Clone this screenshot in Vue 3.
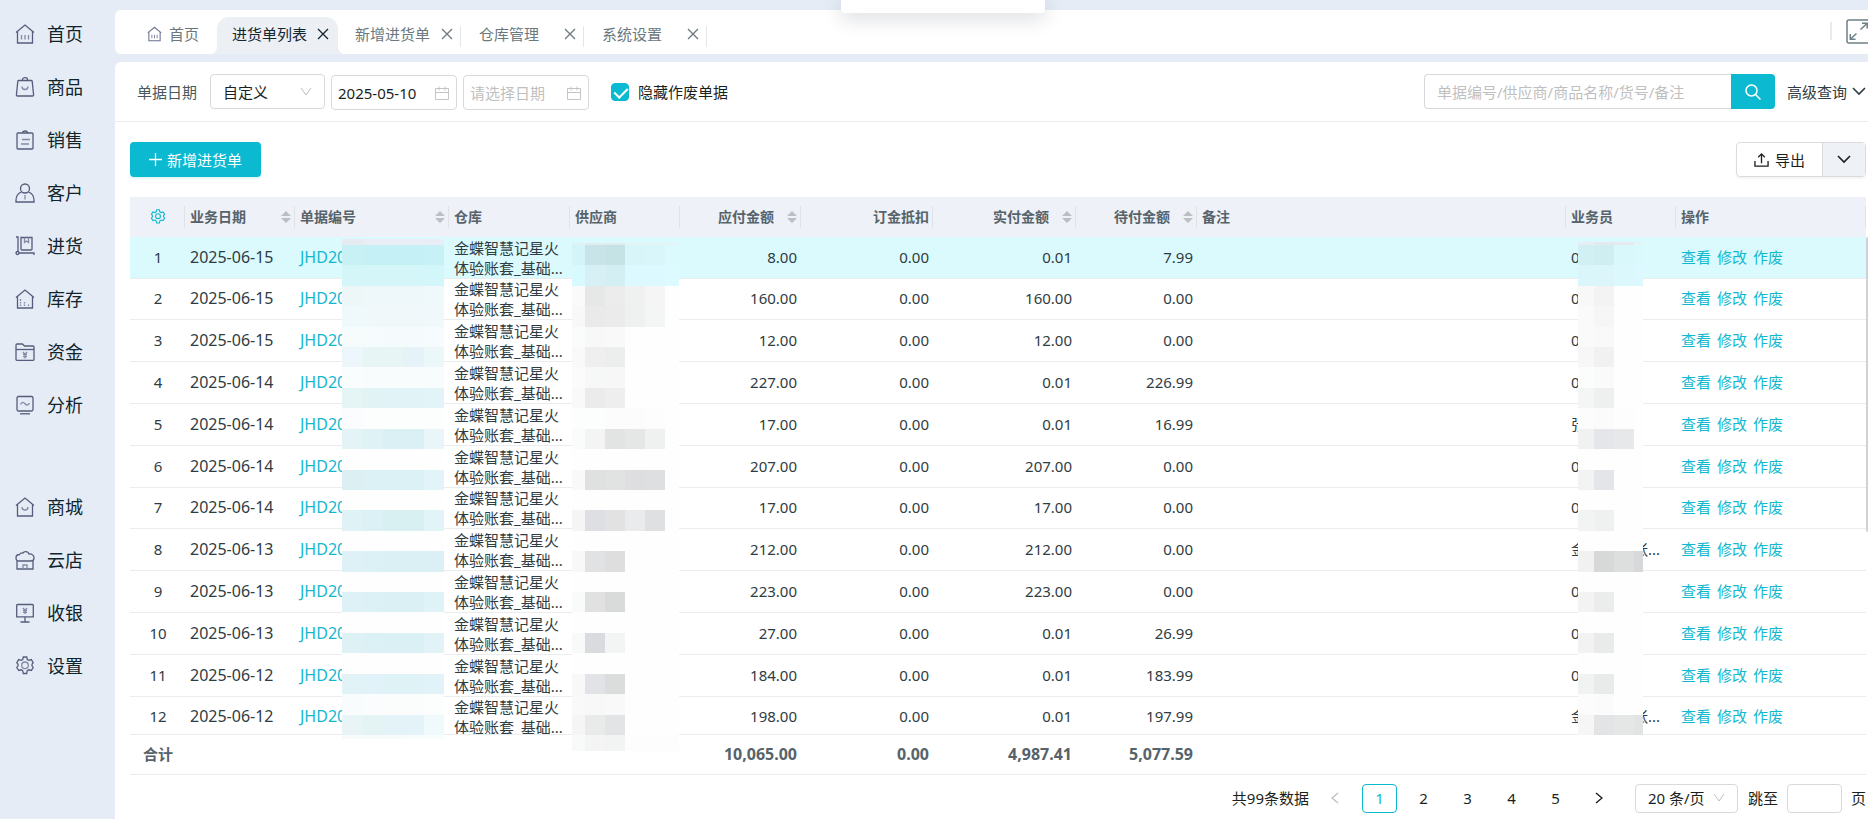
<script setup>
import { ref } from 'vue'

const mainNav = [
  { label: '首页', icon: 'home' },
  { label: '商品', icon: 'bag' },
  { label: '销售', icon: 'clipboard' },
  { label: '客户', icon: 'user' },
  { label: '进货', icon: 'cart' },
  { label: '库存', icon: 'stock' },
  { label: '资金', icon: 'folder' },
  { label: '分析', icon: 'chart' },
]
const moreNav = [
  { label: '商城', icon: 'mall' },
  { label: '云店', icon: 'cloud' },
  { label: '收银', icon: 'cashier' },
  { label: '设置', icon: 'gear' },
]

const gear =
  'M8.3 1h3.4l.6 2.5 1.5.9 2.5-.8 1.9 3-1.2 1.6v1.6l1.2 1.7-1.9 3-2.5-.7-1.5.9-.6 2.8H8.3l-.6-2.8-1.5-.9-2.5.7-1.900-3 1.200-1.700V8.200L1.800 6.600l1.900-3 2.500.8 1.500-.9z'

// Outer strokes are drawn dark, inner details in a lighter tone.
const icons = {
  home: { outer: ['M1 8.500 10 1l9 7.500', 'M2.500 7.500V19h15V7.500'], inner: ['M6.500 11v4.500M10 11v4.500M13.500 11v4.500'] },
  bag: { outer: ['M3.800 3.500h12.400a1 1 0 0 1 1 .9L18.600 18a1 1 0 0 1-1 1H2.400a1 1 0 0 1-1-1L2.800 4.400a1 1 0 0 1 1-.9z', 'M7.500 3.500v-1a2.500 1.800 0 0 1 5 0v1'], inner: ['M7 9.500a3 3 0 0 0 6 0'] },
  clipboard: { outer: ['M3 3h14a1 1 0 0 1 1 1v14a1 1 0 0 1-1 1H3a1 1 0 0 1-1-1V4a1 1 0 0 1 1-1z', 'M7.500 3a2.500 2 0 0 1 5 0'], inner: ['M7 9.500h8M6 14h8'] },
  user: { outer: ['M10 1a4.500 4.500 0 1 1 0 9 4.500 4.500 0 0 1 0-9z', 'M6.500 9C3.500 10 1 13 1 17.500V19h18v-1.500C19 13 16.500 10 13.500 9'], inner: ['M10 12v4.500M9.400 14.500h1.200'] },
  cart: { outer: ['M1 1h2v15', 'M6 1.500h11v11.500a1 1 0 0 1-1 1H7a1 1 0 0 1-1-1z', 'M2.500 15.500a1.500 1.500 0 1 1 0 3 1.500 1.500 0 0 1 0-3z', 'M4 17h15v2'], inner: ['M9.500 1.500v5l2-1.500 2 1.500v-5'] },
  stock: { outer: ['M1 8.500 10 1l9 7.500', 'M2.500 7.500V19h15V7.500'], inner: ['M5.500 10v2M5.500 13v1.500M5.500 15.500v1.500M9.500 13v1.500M9.500 15.500v1.500M13.500 15.500v1.500'] },
  folder: { outer: ['M1 17.500V3a1 1 0 0 1 1-1h5.500l2 2H18a1 1 0 0 1 1 1v12.500a.8.8 0 0 1-.8.8H1.800a.8.8 0 0 1-.8-.8z', 'M1 7.500h18'], inner: ['M8 10l2 2.500L12 10M10 12.500V16.500M8 12.700h4M8 14.600h4'] },
  chart: { outer: ['M3.500 1.500h13a1.500 1.500 0 0 1 1.500 1.500v11.500a1.500 1.500 0 0 1-1.500 1.500h-13A1.500 1.500 0 0 1 2 14.500V3a1.500 1.500 0 0 1 1.500-1.500z', 'M5 18.800h10'], inner: ['M5.500 9.500c1.500-3 3-2.500 4.500-.8s3 2 4.500-.5'] },
  mall: { outer: ['M1 8.500 10 1l9 7.500', 'M2.500 7.500V19h15V7.500'], inner: ['M7 10a3 3 0 0 0 6 0'] },
  cloud: { outer: ['M4 11C1.800 11 1 9.500 1 8c0-2 1.500-3.500 3.500-3.500C5.500 2.500 7.500 3 8 3c1-2 5-2 6 1 3-.5 5 1.500 5 4 0 2-1 3-3 3z', 'M2 11v8h16v-8'], inner: ['M8 19v-4h4v4'] },
  cashier: { outer: ['M2.500 1.500h15a.8.8 0 0 1 .8.8v11.500h-16.600V2.300a.8.8 0 0 1 .8-.8z', 'M10 14v5M5.500 19h9'], inner: ['M8 5l2 2.500L12 5M10 7.500V11M8 7.600h4M8 9.400h4'] },
  gear: { outer: [gear], inner: ['M10 6a3.300 3.300 0 1 1 0 6.600A3.300 3.300 0 0 1 10 6z'] },
}

const tabs = [
  { label: '进货单列表', kind: 'active' },
  { label: '新增进货单', kind: 'plain' },
  { label: '仓库管理', kind: 'wide' },
  { label: '系统设置', kind: 'wide' },
]

const hideVoid = ref(true)
const columns = [
  { key: 'date', label: '业务日期', sort: true },
  { key: 'no', label: '单据编号', sort: true },
  { key: 'store', label: '仓库' },
  { key: 'vendor', label: '供应商' },
  { key: 'due', label: '应付金额', sort: true, num: true },
  { key: 'deposit', label: '订金抵扣', num: true },
  { key: 'paid', label: '实付金额', sort: true, num: true },
  { key: 'rest', label: '待付金额', sort: true, num: true },
  { key: 'memo', label: '备注' },
  { key: 'staff', label: '业务员' },
  { key: 'ops', label: '操作' },
]

const rows = [
  ['2025-06-15', '8.00', '0.01', '7.99', '0'],
  ['2025-06-15', '160.00', '160.00', '0.00', '0'],
  ['2025-06-15', '12.00', '12.00', '0.00', '0'],
  ['2025-06-14', '227.00', '0.01', '226.99', '0'],
  ['2025-06-14', '17.00', '0.01', '16.99', '张'],
  ['2025-06-14', '207.00', '207.00', '0.00', '0'],
  ['2025-06-14', '17.00', '17.00', '0.00', '0'],
  ['2025-06-13', '212.00', '212.00', '0.00', '金', '张...'],
  ['2025-06-13', '223.00', '223.00', '0.00', '0'],
  ['2025-06-13', '27.00', '0.01', '26.99', '0'],
  ['2025-06-12', '184.00', '0.01', '183.99', '0'],
  ['2025-06-12', '198.00', '0.01', '197.99', '金', '张...'],
]

// Masks over private values: one line per band, one colour per column.
function mask(cols, blank, lines) {
  return lines.flatMap((line) => {
    const list = line ? line.split(' ') : []
    return Array.from({ length: cols }, (_, i) => '#' + (list[i] || blank))
  })
}
const docMask = mask(5, 'fefefe', [
  'e4ebf1 e9edf5 e9edf5 e9edf5 e9edf5',
  'c8f1f6 c4f0f6 c4f0f6 c4f0f6 c7f1f7',
  'd5f6f9 d5f6f9 d5f6f9 d5f6f9 d3f6fa',
  'edf7f8 eef7f9 eef7f9 eef7f9 eff8fa',
  'eff8fa f0f8fa f0f8fa f0f8fa f0f8fb',
  'f6fbfc f6fbfd f5fafd f5fafd f7fbfd',
  'edf6fa e7f5f5 e7f5f5 e5f3f8 ecf7fa',
  'fafdfd f9fcfc f9fcfc f9fcfc f9fcfc',
  'e5f4f5 e2f3f6 e2f3f8 e2f3f8 e3f4f9',
  'fbfcfd fcfdfd fcfdfd fcfdfd fcfdfd',
  'e4f4f6 dff2f6 dbf0f4 dbf0f4 e9f5f9',
  '', 'dcf0f3 dbf1f5 dbf1f6 dbf1f6 e3f4f8',
  '', 'dff2f6 dcf1f5 d9f0f3 d9f0f3 e3f4f8',
  '', 'def1f6 dcf1f5 dbf0f4 dbf0f4 dbf0f4',
  '', 'def1f6 dcf1f5 dbf0f4 dbf0f4 dff2f6',
  '', 'def2f6 dcf1f5 dbf0f4 dbf0f4 e2f3f7',
  '', 'e2f3f7 e1f3f8 dff2f6 dff2f6 e1f3f8',
  'f9fcfc fbfcfd fbfdfd fbfdfd fcfdfd',
  'e8f4f6 e4f4f4 e3f3f8 e3f3f8 f0f9fb',
  'f6fafa f6fafa f6fbfb f8fcfc fafdfd',
])
const vendorMask = mask(6, 'fefefe', [
  'dff1f5 dfedf1 dfedf1 e3f3f6 e3f3f6 e3f3f6',
  'd3f4f8 c8e4e8 c5e2e5 d8f6fa d9f7fb dafafe',
  'd8f9fd d6f0f5 d4eff4 dbf9fe dbf9fe dcfaff',
  'fafafa e6e7e7 ececec eff0f0 f4f5f4',
  'f8f8f8 ebeaea ebebeb eff0f0 f4f5f5',
  'fafbfb f7f8f7 f8f9f8',
  'f8f9f8 eeefee eceeed',
  'fafbfa f6f7f7 f7f7f7',
  'f8f9f8 ecebec eeeeee',
  'fcfdfd fcfdfd fcfcfc fcfcfc fdfdfd',
  'fafbfb f4f4f4 e2e4e3 e5e6e6 eff1f0',
  '', 'f9f9f9 dfe1e0 e1e2e2 dedee0 dedfe1',
  '', 'f5f5f5 dedfe2 e1e2e1 eaebec dfe0e2',
  '', 'f8f8f8 e1e2e4 dddedd',
  '', 'f9fafa e0e1e0 d9dada',
  '', 'f8f9f9 d9dbde f3f4f4',
  '', 'f8f8f8 e2e3e6 dbdddc',
  'f9f9f9 f8f8f8 f9f9f9',
  'f5f5f5 e9ebea e3e4e6',
  'f8f9f9 f4f4f4 f2f4f3 fdfdfd fdfdfd fdfdfd',
])
const staffMask = mask(4, 'fefefe', [
  'e6eef3 e4e9ee e6e9ef e3f4f7',
  'd0f0f4 cfeef2 d9f8fc d9f9fd',
  'daf6fb dbf5fa dbf8fd dbf9fe',
  'f8f8f8 f3f3f3', 'f9faf9 f5f6f5', 'fafafa f9f9f9', 'f7f7f7 f1f1f1',
  'fbfcfc fafafa', 'f4f5f5 eef0ef', 'fcfcfc fbfbfb fdfdfd', 'f0f2f1 e5e6e9 e7e8ea',
  '', 'f2f3f3 e4e5e8', '', 'f2f3f3 eff1f0', '', 'f1f1f1 d7d9d9 dddfde d7d8da',
  '', 'f2f3f2 ebeded', '', 'f1f2f1 e9ebea', '', 'f1f3f2 e9ebea',
  'fcfcfc fbfbfb', 'f6f6f6 e2e4e6 e5e7e7 e2e4e4',
])

const current = ref(1)
</script>

<template>
  <div class="shell">
    <aside class="sidebar">
      <nav v-for="(group, g) in [mainNav, moreNav]" :key="g" class="nav-group">
        <a v-for="item in group" :key="item.label" href="#" class="nav-item">
          <svg class="nav-icon" viewBox="0 0 20 20">
            <path v-for="d in icons[item.icon].outer" :key="d" :d="d" />
            <path v-for="d in icons[item.icon].inner" :key="d" :d="d" class="soft" />
          </svg>
          <span>{{ item.label }}</span>
        </a>
      </nav>
    </aside>

    <div class="main">
      <header class="tabs">
        <a href="#" class="tab home-tab">
          <svg class="home-icon" viewBox="0 0 20 20">
            <path v-for="d in icons.home.outer" :key="d" :d="d" />
            <path v-for="d in icons.home.inner" :key="d" :d="d" class="soft" />
          </svg>
          首页
        </a>
        <div v-for="tab in tabs" :key="tab.label" class="tab" :class="tab.kind">
          <a href="#">{{ tab.label }}</a>
          <button class="close" :aria-label="'关闭' + tab.label">
            <svg viewBox="0 0 12 12"><path d="M1 1l10 10M11 1 1 11" /></svg>
          </button>
        </div>
        <div class="tabs-end">
          <i class="bar"></i>
          <button class="full" aria-label="全屏">
            <svg viewBox="0 0 26 25">
              <rect x="1" y="1" width="24" height="23" rx="2" />
              <path d="M14.500 10.500 21 4.500M16 4.300h5.200v5.200M10.500 14.500 4.500 20M4.300 15v5.200h5.200" />
            </svg>
          </button>
        </div>
      </header>

      <section class="panel">
        <div class="filters">
          <label class="lbl" for="range">单据日期</label>
          <div class="select-box range">
            <select id="range"><option>自定义</option></select>
            <svg class="caret" viewBox="0 0 12 10"><path d="M1 1l5 7 5-7" /></svg>
          </div>
          <div v-for="(v, i) in ['2025-05-10', '']" :key="i" class="date-box">
            <input type="text" :value="v" placeholder="请选择日期" :aria-label="i ? '结束日期' : '开始日期'" />
            <svg viewBox="0 0 14 14"><path d="M.5 2.500h13v11H.5zM.5 6.500h13M4 .5v4M10 .5v4" /></svg>
          </div>
          <label class="check">
            <input v-model="hideVoid" type="checkbox" />
            <span>隐藏作废单据</span>
          </label>
          <form class="search" @submit.prevent>
            <input type="text" placeholder="单据编号/供应商/商品名称/货号/备注" aria-label="搜索" />
            <button aria-label="查询">
              <svg viewBox="0 0 16 16"><circle cx="6.500" cy="6.500" r="5.500" /><path d="M10.500 10.500 15.500 15.500" /></svg>
            </button>
          </form>
          <button class="advanced">
            高级查询
            <svg viewBox="0 0 14 9"><path d="M1 1l6 6 6-6" /></svg>
          </button>
        </div>

        <div class="actions">
          <button class="primary">
            <svg viewBox="0 0 13 13"><path d="M6.500 0v13M0 6.500h13" /></svg>
            新增进货单
          </button>
          <div class="export">
            <button class="export-main">
              <svg viewBox="0 0 16 16"><path d="M1 9v5.500h14V9M8 11.500V1.500M4.500 5 8 1.500 11.500 5" /></svg>
              导出
            </button>
            <button class="export-more" aria-label="更多导出">
              <svg viewBox="0 0 14 9"><path d="M1 1l6 6 6-6" /></svg>
            </button>
          </div>
        </div>

        <div class="grid">
          <div class="scroller">
            <table>
              <colgroup>
                <col class="c-idx" />
                <col v-for="c in columns" :key="c.key" :class="'c-' + c.key" />
              </colgroup>
              <thead>
                <tr>
                  <th class="idx">
                    <svg class="gear" viewBox="0 0 20 20"><path :d="gear" /><circle cx="10" cy="9" r="3" /></svg>
                  </th>
                  <th v-for="c in columns" :key="c.key" :class="{ num: c.num }">
                    <div class="th-in">
                      <span>{{ c.label }}</span>
                      <svg v-if="c.sort" class="sort" viewBox="0 0 10 12"><path d="M0 5l5-5 5 5zM0 7h10l-5 5z" /></svg>
                    </div>
                  </th>
                </tr>
              </thead>
              <tbody>
                <tr v-for="(r, i) in rows" :key="i" :class="{ on: i === 0 }">
                  <td class="idx">{{ i + 1 }}</td>
                  <td class="big">{{ r[0] }}</td>
                  <td class="big"><a href="#">JHD20</a></td>
                  <td class="store">金蝶智慧记星火<br />体验账套_基础...</td>
                  <td></td>
                  <td class="num">{{ r[1] }}</td>
                  <td class="num">0.00</td>
                  <td class="num">{{ r[2] }}</td>
                  <td class="num">{{ r[3] }}</td>
                  <td></td>
                  <td class="staff">{{ r[4] }}<span v-if="r[5]">{{ r[5] }}</span></td>
                  <td>
                    <div class="ops"><a href="#">查看</a><a href="#">修改</a><a href="#">作废</a></div>
                  </td>
                </tr>
              </tbody>
              <tfoot>
                <tr>
                  <td colspan="5" class="sum">合计</td>
                  <td class="num big">10,065.00</td>
                  <td class="num big">0.00</td>
                  <td class="num big">4,987.41</td>
                  <td class="num big">5,077.59</td>
                  <td colspan="3"></td>
                </tr>
              </tfoot>
            </table>
          </div>
          <div class="mask doc"><i v-for="(c, i) in docMask" :key="i" :style="{ background: c }"></i></div>
          <div class="mask vendor"><i v-for="(c, i) in vendorMask" :key="i" :style="{ background: c }"></i></div>
          <div class="mask person"><i v-for="(c, i) in staffMask" :key="i" :style="{ background: c }"></i></div>
          <div class="thumb"></div>
        </div>

        <footer class="pager">
          <span class="total">共99条数据</span>
          <button class="arrow dim" aria-label="上一页"><svg viewBox="0 0 8 12"><path d="M7 1 1 6l6 5" /></svg></button>
          <button v-for="n in 5" :key="n" class="page" :class="{ now: n === current }" @click="current = n">{{ n }}</button>
          <button class="arrow" aria-label="下一页"><svg viewBox="0 0 8 12"><path d="M1 1l6 5-6 5" /></svg></button>
          <div class="select-box size">
            <select aria-label="每页条数"><option>20 条/页</option></select>
            <svg class="caret" viewBox="0 0 12 10"><path d="M1 1l5 7 5-7" /></svg>
          </div>
          <label class="jump">跳至<input type="text" />页</label>
        </footer>
      </section>
    </div>

    <div class="popup"></div>
  </div>
</template>

<style>
body {
  margin: 0;
  overflow: hidden;
}
</style>

<style scoped>
.shell {
  display: flex;
  position: relative;
  height: 100vh;
  overflow: hidden;
  background: #e5ecf5;
  font: 15px/20px 'Noto Sans', 'Noto Sans CJK SC', sans-serif;
  color: #2f3c42;
}
.shell * {
  box-sizing: border-box;
}
a {
  color: inherit;
  text-decoration: none;
}
button,
input,
select {
  font: inherit;
  color: inherit;
  margin: 0;
  padding: 0;
  border: 0;
  background: none;
  outline: 0;
}
svg {
  fill: none;
  stroke: currentColor;
  flex: none;
}

.sidebar {
  flex: none;
  width: 115px;
  padding-top: 7px;
}
.nav-group + .nav-group {
  margin-top: 49px;
}
.nav-item {
  display: flex;
  align-items: center;
  gap: 12px;
  height: 53px;
  padding-left: 15px;
  font-size: 18px;
  color: #10242c;
}
.nav-icon {
  width: 20px;
  height: 20px;
  color: #565c7c;
  stroke-width: 1.3;
}
.soft {
  stroke: #8489a6;
}

.main {
  flex: 1;
  min-width: 0;
  display: flex;
  flex-direction: column;
  gap: 8px;
  padding-top: 10px;
}
.tabs {
  flex: none;
  display: flex;
  align-items: flex-end;
  height: 44px;
  background: #fff;
  border-radius: 6px 0 0 6px;
  color: #6b787d;
}
.tab {
  display: flex;
  align-items: center;
  height: 37px;
  padding-bottom: 4px;
  position: relative;
}
.home-tab {
  width: 102px;
  padding-left: 32px;
  gap: 7px;
}
.home-icon {
  width: 15px;
  height: 16px;
  color: #6a7090;
  stroke-width: 1.4;
}
.close {
  display: flex;
}
.close svg {
  width: 12px;
  height: 12px;
  stroke-width: 1.3;
}
.active {
  width: 121px;
  padding-left: 15px;
  gap: 10px;
  background: #eceff4;
  border-radius: 12px 12px 0 0;
  color: #14262e;
}
.active::before,
.active::after {
  content: '';
  position: absolute;
  bottom: 0;
  width: 6px;
  height: 8px;
}
.active::before {
  left: -6px;
  background: radial-gradient(ellipse 6px 8px at 0 0, #fff 98%, #eceff4);
}
.active::after {
  right: -6px;
  background: radial-gradient(ellipse 6px 8px at 100% 0, #fff 98%, #eceff4);
}
.plain {
  width: 123px;
  padding-left: 17px;
  gap: 11px;
}
.wide {
  width: 123px;
  padding: 0 8px 4px 18px;
  justify-content: space-between;
}
.plain::after,
.wide::after {
  content: '';
  position: absolute;
  right: 0;
  bottom: 7px;
  width: 1px;
  height: 21px;
  background: #e4e7ea;
}
.tabs-end {
  display: flex;
  align-items: center;
  gap: 14px;
  height: 44px;
  margin-left: auto;
  margin-right: -4px;
  padding-bottom: 2px;
}
.bar {
  width: 2px;
  height: 18px;
  background: #e8eaec;
}
.full {
  display: flex;
  color: #6f8086;
}
.full svg {
  width: 26px;
  height: 25px;
  stroke-width: 1.5;
}

.panel {
  flex: 1;
  min-height: 0;
  display: flex;
  flex-direction: column;
  background: #fff;
  border-radius: 6px 0 0 0;
}
.filters {
  flex: none;
  display: flex;
  align-items: center;
  height: 60px;
  padding-left: 22px;
  border-bottom: 1px solid #e9ebec;
}
.lbl {
  color: #4a575c;
}
.select-box {
  position: relative;
  border: 1px solid #d9d9d9;
  border-radius: 4px;
  color: #1b1f22;
}
.select-box select {
  appearance: none;
  width: 100%;
  height: 100%;
  padding-left: 12px;
}
.caret {
  position: absolute;
  right: 12px;
  top: 50%;
  width: 12px;
  height: 10px;
  margin-top: -5px;
  color: #bfbfbf;
  pointer-events: none;
}
.range {
  width: 115px;
  height: 35px;
  margin-left: 13px;
}
.date-box {
  display: flex;
  align-items: center;
  width: 126px;
  height: 35px;
  margin: 2px 0 0 6px;
  padding: 0 7px 0 6px;
  border: 1px solid #d9d9d9;
  border-radius: 4px;
  color: #1b1f22;
}
.date-box input {
  flex: 1;
  min-width: 0;
}
.date-box svg {
  width: 14px;
  height: 14px;
  color: #c4c4c4;
}
input::placeholder {
  color: #bfbfbf;
  opacity: 1;
}
.check {
  display: flex;
  align-items: center;
  gap: 9px;
  margin-left: 22px;
  color: #1b1f22;
}
.check input {
  appearance: none;
  width: 18px;
  height: 18px;
  border-radius: 4px;
  border: 1px solid #d9d9d9;
  position: relative;
}
.check input:checked {
  background: #0bb9d0;
  border-color: #0bb9d0;
}
.check input:checked::after {
  content: '';
  position: absolute;
  left: 5px;
  top: 1px;
  width: 6px;
  height: 11px;
  border: solid #fff;
  border-width: 0 2px 2px 0;
  transform: rotate(45deg);
}
.search {
  display: flex;
  width: 351px;
  height: 35px;
  margin-left: auto;
}
.search input {
  flex: 1;
  min-width: 0;
  padding-left: 12px;
  border: 1px solid #d9d9d9;
  border-right: 0;
  border-radius: 4px 0 0 4px;
}
.search button {
  display: flex;
  align-items: center;
  justify-content: center;
  width: 44px;
  background: #0bb9d0;
  border-radius: 0 4px 4px 0;
  color: #fff;
}
.search svg {
  width: 16px;
  height: 16px;
  stroke-width: 1.5;
}
.advanced {
  display: flex;
  align-items: center;
  gap: 5px;
  margin: 0 2px 0 12px;
}
.advanced svg,
.export-more svg {
  width: 14px;
  height: 9px;
  stroke-width: 1.6;
}

.actions {
  flex: none;
  display: flex;
  align-items: center;
  justify-content: space-between;
  height: 75px;
  padding: 0 2px 0 15px;
}
.primary {
  display: flex;
  align-items: center;
  justify-content: center;
  gap: 5px;
  width: 131px;
  height: 35px;
  background: #0bb9d0;
  border-radius: 4px;
  box-shadow: 0 2px 2px #e0f6f8;
  color: #fff;
}
.primary svg {
  width: 13px;
  height: 13px;
  stroke-width: 1.3;
}
.export {
  display: flex;
  width: 130px;
  height: 35px;
  border: 1px solid #d9dbdd;
  border-radius: 4px;
  box-shadow: 0 2px 2px #f5f5f5;
  color: #1b1f22;
}
.export button {
  display: flex;
  align-items: center;
  justify-content: center;
}
.export-main {
  flex: 1;
  gap: 6px;
}
.export-main svg {
  width: 15px;
  height: 16px;
  stroke-width: 1.4;
}
.export .export-more {
  width: 43px;
  border-left: 1px solid #d9dbdd;
  background: #eef2f7;
}

.grid {
  position: relative;
  flex: 1;
  min-height: 0;
  margin: 0 2px 0 15px;
}
.scroller {
  height: 100%;
  overflow: auto;
  scrollbar-width: none;
}
table {
  width: 100%;
  table-layout: fixed;
  border-spacing: 0;
}
.c-idx { width: 55px; }
.c-date { width: 110px; }
.c-no { width: 154px; }
.c-store { width: 121px; }
.c-vendor { width: 110px; }
.c-due { width: 121px; }
.c-deposit { width: 132px; }
.c-paid { width: 143px; }
.c-rest { width: 121px; }
.c-staff { width: 110px; }
.c-ops { width: 190px; }
th,
td {
  padding: 0 4px 0 5px;
  text-align: left;
  white-space: nowrap;
}
th {
  position: sticky;
  top: 0;
  z-index: 1;
  height: 40px;
  background: #eef1f7;
  font-size: 14px;
  color: #56636a;
}
th::after {
  content: '';
  position: absolute;
  right: 0;
  top: 9px;
  width: 1px;
  height: 22px;
  background: #dfe2e6;
}
.th-in {
  display: flex;
  align-items: center;
  justify-content: space-between;
}
.num .th-in {
  justify-content: flex-end;
  gap: 13px;
}
.sort {
  width: 10px;
  height: 12px;
  fill: #bbbfc2;
  stroke: none;
}
.gear {
  display: block;
  width: 16px;
  height: 16px;
  margin: auto;
  color: #0bb9d0;
  stroke-width: 1.4;
}
.idx {
  text-align: center;
}
tbody td {
  height: 42px;
  padding-bottom: 2px;
  border-bottom: 1px solid #ebecee;
}
tbody tr:nth-child(5n + 2) td {
  height: 41px;
}
tbody .store {
  padding-bottom: 0;
}
.on td {
  background: #dafafe;
}
.big {
  font-size: 16px;
}
tbody a {
  color: #13b8cf;
}
th.num,
td.num {
  text-align: right;
}
.staff span {
  margin-left: 47px;
}
.ops {
  display: flex;
  gap: 6px;
}
tfoot td {
  position: sticky;
  bottom: 0;
  height: 41px;
  padding-bottom: 2px;
  background: #fff;
  border: solid #ebecee;
  border-width: 1px 0;
  font-weight: 700;
  color: #56636a;
}
tfoot .sum {
  padding-left: 13px;
  font-weight: 600;
}
.mask {
  position: absolute;
  z-index: 2;
  display: grid;
}
.doc {
  left: 212px;
  top: 42px;
  width: 102px;
  height: 500px;
  grid-template: 6px repeat(24, 1fr) 4px / 21px 20px 20px 21px 20px;
}
.vendor {
  left: 442px;
  top: 46px;
  width: 107px;
  height: 508px;
  grid-template: 2px repeat(24, 1fr) 16px / 13px 20px 20px 20px 20px 14px;
}
.person {
  right: 223px;
  top: 45px;
  width: 65px;
  height: 493px;
  grid-template: 3px repeat(24, 1fr) / 16px 20px 20px 9px;
}
.thumb {
  position: absolute;
  right: -2px;
  top: 40px;
  width: 2px;
  height: 295px;
  border-radius: 2px 0 0 2px;
  background: #ced2d5;
}

.pager {
  flex: none;
  display: flex;
  align-items: center;
  justify-content: flex-end;
  height: 44px;
  padding: 2px 2px 0 0;
  color: #1b1f22;
}
.pager button {
  width: 35px;
  height: 29px;
  margin-left: 9px;
  border-radius: 4px;
}
.pager .arrow {
  display: flex;
  align-items: center;
  justify-content: center;
}
.arrow svg {
  width: 8px;
  height: 12px;
  stroke-width: 1.4;
}
.dim {
  color: #bfbfbf;
}
.pager .now {
  border: 1px solid #0bb9d0;
  color: #0bb9d0;
}
.size {
  width: 103px;
  height: 29px;
  margin-left: 18px;
}
.jump {
  display: flex;
  align-items: center;
  gap: 9px;
  margin-left: 10px;
}
.jump input {
  width: 55px;
  height: 29px;
  padding: 0 8px;
  border: 1px solid #d9d9d9;
  border-radius: 4px;
}

.popup {
  position: absolute;
  z-index: 3;
  left: 45%;
  top: 0;
  width: 204px;
  height: 13px;
  border-radius: 0 0 4px 4px;
  background: #fff;
  box-shadow: 0 4px 20px rgba(40, 50, 70, 0.22);
}
</style>
